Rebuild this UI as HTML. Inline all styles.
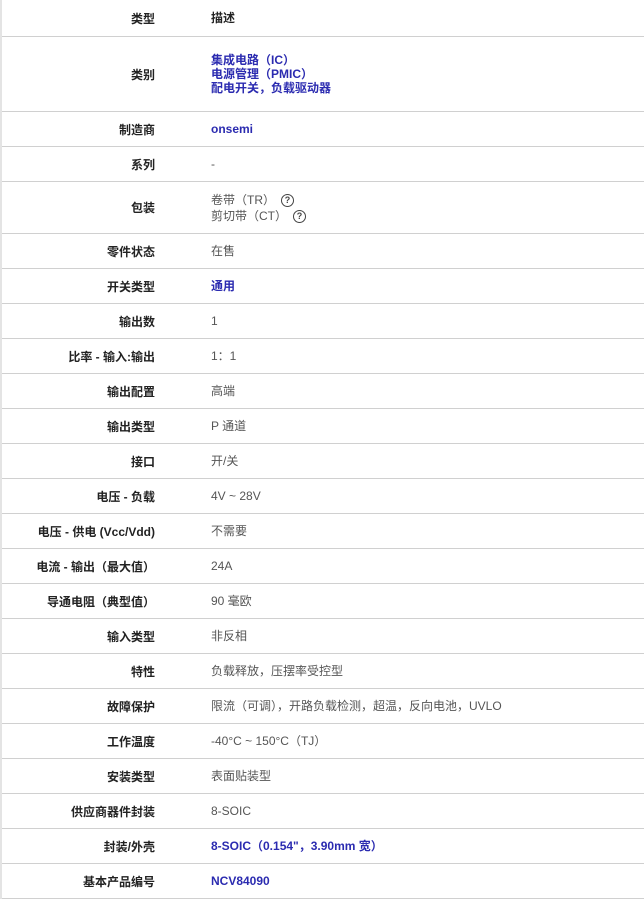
<!DOCTYPE html>
<html><head><meta charset="utf-8"><style>
html,body{margin:0;padding:0;background:#fff;width:644px;height:905px;overflow:hidden}
body{font-family:"Liberation Sans","Noto Sans CJK SC",sans-serif;font-size:12px}
.wrap{position:absolute;left:0;top:0;width:644px;height:899px;border-left:2px solid #e4e4e4;box-sizing:border-box}
.row{position:absolute;left:0;width:642px;border-bottom:1px solid #d0d0d0;box-sizing:border-box}
.l{position:absolute;right:489px;top:0;bottom:0;display:flex;align-items:center;font-weight:bold;color:#222;white-space:nowrap}
.v{position:absolute;left:209px;top:0;bottom:0;display:flex;flex-direction:column;justify-content:center;color:#555;white-space:nowrap;line-height:14px}
.a{color:#2b2bb0;font-weight:bold}
.q{display:inline-block;width:11px;height:11px;border:1.3px solid #444;border-radius:50%;font-size:9px;line-height:11px;text-align:center;color:#444;font-weight:bold;vertical-align:middle;margin-left:6px}
</style></head><body><div class="wrap">
<div class="row" style="top:0;height:37px"><div class="l">类型</div><div class="v" style="color:#222;font-weight:bold">描述</div></div>
<div class="row" style="top:37px;height:75px"><div class="l">类别</div><div class="v"><span class="a">集成电路（IC）</span><span class="a">电源管理（PMIC）</span><span class="a">配电开关，负载驱动器</span></div></div>
<div class="row" style="top:112px;height:35px"><div class="l">制造商</div><div class="v"><span class="a">onsemi</span></div></div>
<div class="row" style="top:147px;height:35px"><div class="l">系列</div><div class="v">-</div></div>
<div class="row" style="top:182px;height:52px"><div class="l">包装</div><div class="v" style="line-height:16px"><span>卷带（TR）<span class="q">?</span></span><span>剪切带（CT）<span class="q">?</span></span></div></div>
<div class="row" style="top:234px;height:35px"><div class="l">零件状态</div><div class="v">在售</div></div>
<div class="row" style="top:269px;height:35px"><div class="l">开关类型</div><div class="v"><span class="a">通用</span></div></div>
<div class="row" style="top:304px;height:35px"><div class="l">输出数</div><div class="v">1</div></div>
<div class="row" style="top:339px;height:35px"><div class="l">比率 - 输入:输出</div><div class="v">1：1</div></div>
<div class="row" style="top:374px;height:35px"><div class="l">输出配置</div><div class="v">高端</div></div>
<div class="row" style="top:409px;height:35px"><div class="l">输出类型</div><div class="v">P 通道</div></div>
<div class="row" style="top:444px;height:35px"><div class="l">接口</div><div class="v">开/关</div></div>
<div class="row" style="top:479px;height:35px"><div class="l">电压 - 负载</div><div class="v">4V ~ 28V</div></div>
<div class="row" style="top:514px;height:35px"><div class="l">电压 - 供电 (Vcc/Vdd)</div><div class="v">不需要</div></div>
<div class="row" style="top:549px;height:35px"><div class="l">电流 - 输出（最大值）</div><div class="v">24A</div></div>
<div class="row" style="top:584px;height:35px"><div class="l">导通电阻（典型值）</div><div class="v">90 毫欧</div></div>
<div class="row" style="top:619px;height:35px"><div class="l">输入类型</div><div class="v">非反相</div></div>
<div class="row" style="top:654px;height:35px"><div class="l">特性</div><div class="v">负载释放，压摆率受控型</div></div>
<div class="row" style="top:689px;height:35px"><div class="l">故障保护</div><div class="v">限流（可调），开路负载检测，超温，反向电池，UVLO</div></div>
<div class="row" style="top:724px;height:35px"><div class="l">工作温度</div><div class="v">-40°C ~ 150°C（TJ）</div></div>
<div class="row" style="top:759px;height:35px"><div class="l">安装类型</div><div class="v">表面贴装型</div></div>
<div class="row" style="top:794px;height:35px"><div class="l">供应商器件封装</div><div class="v">8-SOIC</div></div>
<div class="row" style="top:829px;height:35px"><div class="l">封装/外壳</div><div class="v"><span class="a">8-SOIC（0.154"，3.90mm 宽）</span></div></div>
<div class="row" style="top:864px;height:35px"><div class="l">基本产品编号</div><div class="v"><span class="a">NCV84090</span></div></div>
</div></body></html>
